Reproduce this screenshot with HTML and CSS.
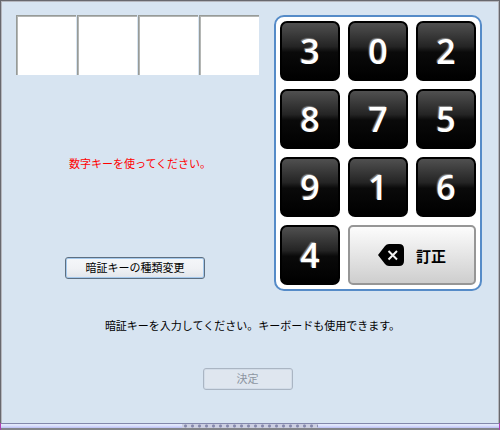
FILE: index.html
```
<!DOCTYPE html>
<html lang="ja">

<head>
  <meta charset="UTF-8">
  <meta name="viewport" content="width=device-width, initial-scale=1.0">
  <title>暗証キー</title>
  <link rel="stylesheet" href="styles.css">
</head>

<body>
  <form class="window">
    <main class="content">
      <section class="entry">
        <div class="fields">
          <input class="field" type="password" maxlength="1" aria-label="1">
          <input class="field" type="password" maxlength="1" aria-label="2">
          <input class="field" type="password" maxlength="1" aria-label="3">
          <input class="field" type="password" maxlength="1" aria-label="4">
        </div>
        <div class="entry-info">
          <p class="message warning">数字キーを使ってください。</p>
          <button class="btn btn-wide" type="button">暗証キーの種類変更</button>
        </div>
      </section>

      <section class="keypad">
        <button class="key" type="button">3</button>
        <button class="key" type="button">0</button>
        <button class="key" type="button">2</button>
        <button class="key" type="button">8</button>
        <button class="key" type="button">7</button>
        <button class="key" type="button">5</button>
        <button class="key" type="button">9</button>
        <button class="key" type="button">1</button>
        <button class="key" type="button">6</button>
        <button class="key" type="button">4</button>
        <button class="key-clear" type="button">
          <svg width="26" height="22" viewBox="0 0 26 22" aria-hidden="true">
            <path d="M0 11 L7 2 Q8.500 0 11 0 H21 Q26 0 26 5 V17 Q26 22 21 22 H11 Q8.500 22 7 20 Z" fill="#000" />
            <path d="M10.500 7 L19 15.500 M19 7 L10.500 15.500" stroke="#f2f2f2" stroke-width="2" />
          </svg>
          <span>訂正</span>
        </button>
      </section>
    </main>

    <footer class="footer">
      <p class="message">暗証キーを入力してください。キーボードも使用できます。</p>
      <button class="btn" type="submit" disabled>決定</button>
    </footer>

    <div class="grip">
      <div class="grip-dots"></div>
    </div>
  </form>
</body>

</html>
```
FILE: styles.css
```
* {
  box-sizing: border-box;
}

body {
  margin: 0;
  font-family: "Noto Sans CJK JP", sans-serif;
  font-size: 11px;
  line-height: 16px;
  color: #000;
  background-color: #d7e4f1;
}

button {
  font-family: inherit;
}

.window {
  display: flex;
  flex-direction: column;
  min-height: 100vh;
  border: 1px solid #68686e;
  border-bottom: 0;
  box-shadow: inset 0 0 0 1px #b5b7be;
}

.content {
  display: flex;
  justify-content: space-between;
  padding: 14px 17px 0 15px;
}

.entry {
  display: flex;
  flex-direction: column;
}

.fields {
  display: flex;
  gap: 1px;
}

.field {
  width: 60px;
  height: 60px;
  padding: 0;
  border: 0 solid #979b98;
  border-width: 1px 0 0 1px;
  background-color: #fff;
  box-shadow: inset 1px 1px 0 #b4b6b4;
  font-size: 32px;
  text-align: center;
}

.entry-info {
  display: flex;
  flex: 1;
  flex-direction: column;
  align-items: center;
  justify-content: space-between;
  padding: 80px 5px 12px 0;
}

.message {
  margin: 0;
  padding-left: 10px;
}

.warning {
  color: #f00;
}

/* Keypad */
.keypad {
  display: grid;
  grid-template-columns: repeat(3, 60px);
  gap: 8px;
  padding: 4px;
  border: 2px solid #558bc8;
  border-radius: 10px;
  background-color: #fff;
}

.key {
  height: 60px;
  padding: 0;
  border: 2px solid #000;
  border-radius: 7px;
  background: linear-gradient(#505050, #242424 42%, #0a0a0a 52%, #000);
  color: #fff;
  font-family: "Open Sans", "Noto Sans", sans-serif;
  font-size: 34px;
  font-weight: 600;
  line-height: 34px;
  text-shadow: -1px -1px 1px #888;
}

.key-clear {
  display: flex;
  grid-column: span 2;
  align-items: center;
  justify-content: center;
  gap: 12px;
  height: 60px;
  padding: 0;
  border: 2px solid #969696;
  border-radius: 5px;
  background: linear-gradient(#fcfcfc, #cecece);
  color: #000;
  font-size: 15px;
  font-weight: bold;
}

/* Footer */
.footer {
  display: flex;
  flex: 1;
  flex-direction: column;
  align-items: center;
  gap: 35px;
  padding: 26px 5px 0 0;
}

.btn {
  width: 90px;
  height: 22px;
  padding: 0 0 2px;
  border: 1px solid #5d6f81;
  border-radius: 3px;
  background: linear-gradient(#f5f7f9, #f0f2f5 50%, #e1e5eb);
  box-shadow: inset 0 0 0 1px #a5c9ed;
  color: #000;
  font-size: 11px;
  line-height: 16px;
}

.btn-wide {
  width: 140px;
}

.btn:disabled {
  border-color: #aab5c3;
  background: #dfe6ef;
  box-shadow: inset 0 0 0 1px #d2dce8;
  color: #8d95a1;
}

/* Resize grip, with the magenta window corners */
.grip {
  height: 7px;
  border-top: 1px solid #8388ac;
  border-bottom: 2px solid #83858a;
  background: linear-gradient(#e2e8fb 1px, #cbcffa 3px, #b8bdf0);
  box-shadow: -1px 0 0 #b040b0, 1px 0 0 #b040b0;
}

.grip-dots {
  width: 136px;
  height: 4px;
  margin: 0 auto;
  background: radial-gradient(circle, #8588ac 1px, #cccfe2 2px) 0 0 / 7px 4px;
}
```
